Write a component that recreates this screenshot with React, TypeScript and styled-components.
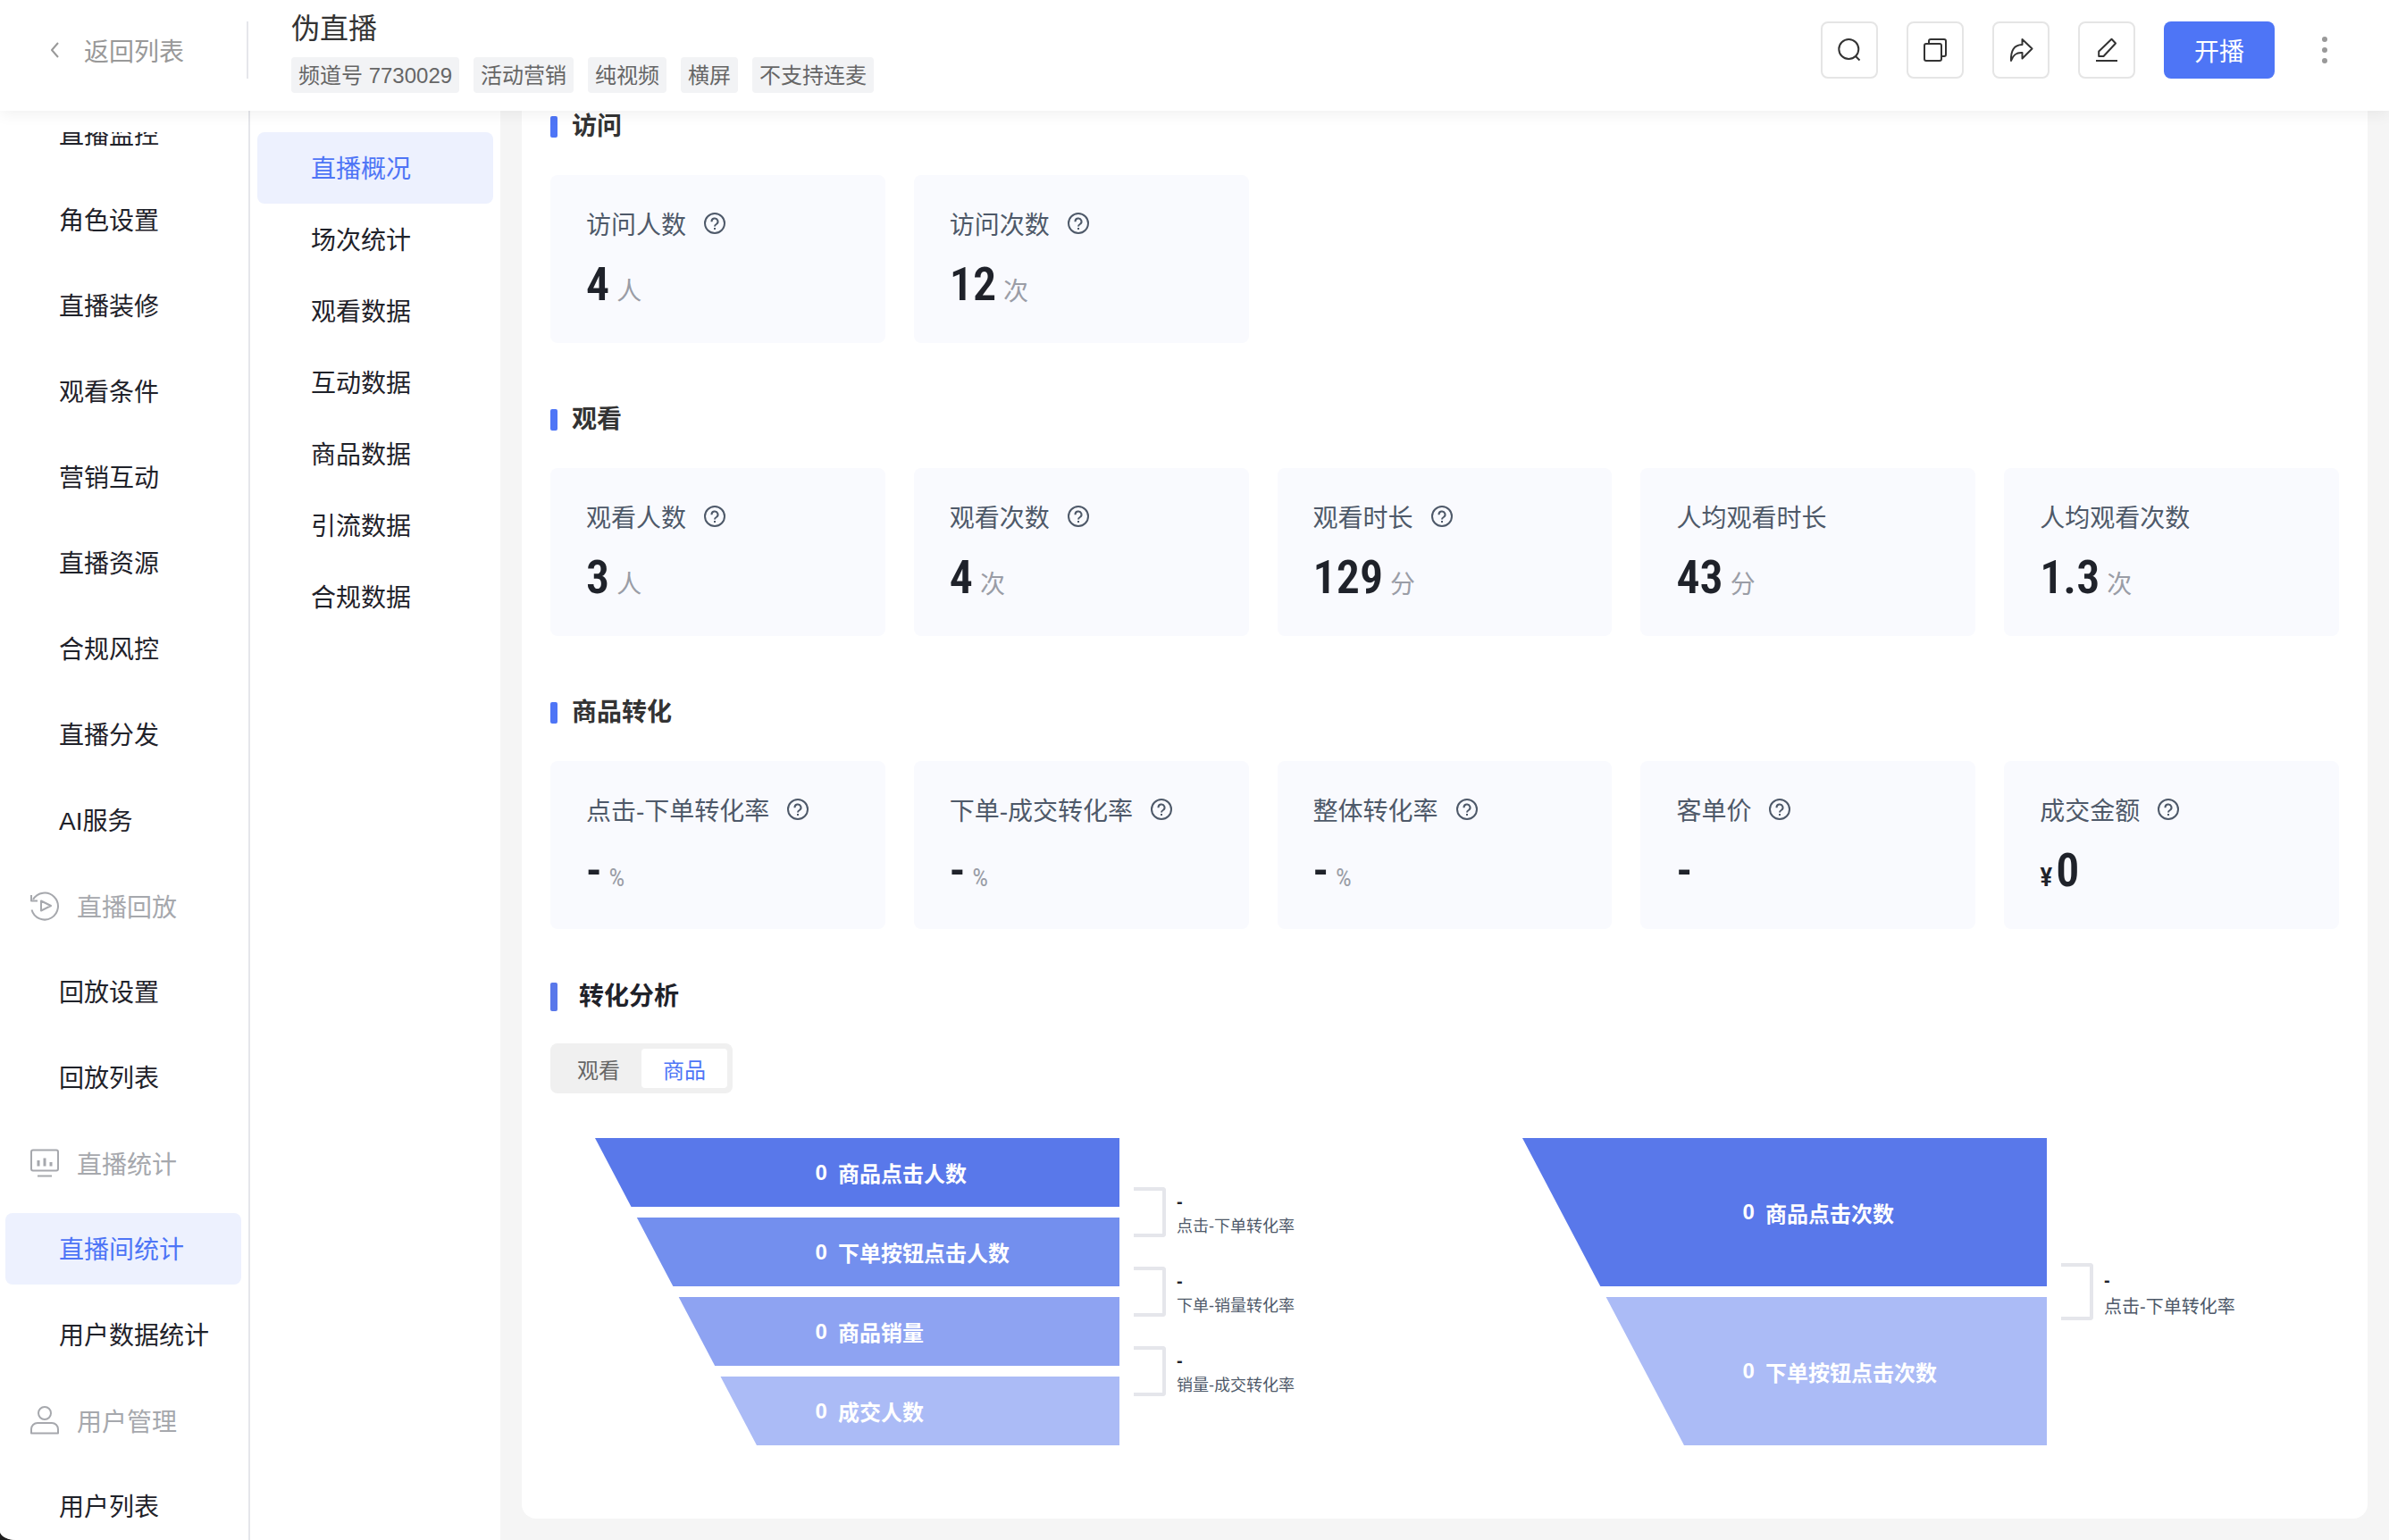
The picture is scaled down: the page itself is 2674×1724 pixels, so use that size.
import React from 'react';
import styled, { createGlobalStyle, css } from 'styled-components';

const sans = `"Liberation Sans", "Noto Sans CJK SC", sans-serif`;
const narrow = `"Roboto Condensed", Roboto, "Noto Sans CJK SC", sans-serif`;

const GlobalStyle = createGlobalStyle`
  *, *::before, *::after { box-sizing: border-box; }
  body { margin: 0; background: #1f1f1f; font-family: ${sans}; }
  h1, h2, p, ul, dl, dd { margin: 0; padding: 0; }
  ul { list-style: none; }
  a { color: inherit; text-decoration: none; }
  button { font: inherit; cursor: pointer; }
`;

const Page = styled.div`
  display: flex;
  flex-direction: column;
  height: 100vh;
  overflow: hidden;
  background: #f5f5f5;
  border-bottom-left-radius: 18px 10px;
`;

const Header = styled.header`
  position: relative;
  z-index: 1;
  display: flex;
  flex: none;
  align-items: flex-start;
  height: 124px;
  background: #fff;
  box-shadow: 0 4px 16px rgba(0, 0, 0, 0.06);
`;

const BackLink = styled.a`
  display: flex;
  align-items: center;
  gap: 20px;
  width: 278px;
  height: 64px;
  margin-top: 24px;
  padding-left: 50px;
  border-right: 2px solid #e5e6eb;
  font-size: 28px;
  color: #999;
`;

const ChannelInfo = styled.div`
  flex: 1;
  padding: 8px 0 0 48px;
`;

const ChannelTitle = styled.h1`
  font-size: 32px;
  font-weight: 400;
  line-height: 48px;
  color: #333;
`;

const TagList = styled.ul`
  display: flex;
  gap: 16px;
  margin-top: 8px;
`;

const Tag = styled.li`
  padding: 2px 8px 0;
  border-radius: 4px;
  background: #f2f3f5;
  font-size: 24px;
  line-height: 38px;
  color: #666;
`;

const Actions = styled.div`
  display: flex;
  align-items: center;
  gap: 32px;
  padding: 24px 48px 0 0;
`;

const IconButton = styled.button`
  display: grid;
  place-items: center;
  width: 64px;
  height: 64px;
  padding: 0;
  border: 2px solid #e5e5e5;
  border-radius: 8px;
  background: #fff;
  color: #333;
`;

const StartButton = styled.button`
  width: 124px;
  height: 64px;
  padding: 0;
  border: 0;
  border-radius: 8px;
  background: #4e75f6;
  font-size: 28px;
  color: #fff;
`;

const MoreButton = styled.button`
  display: grid;
  place-items: center;
  width: 48px;
  height: 64px;
  padding: 0;
  border: 0;
  background: none;
  color: #999;
`;

const Body = styled.div`
  display: flex;
  flex: 1;
  min-height: 0;
`;

const Sidebar = styled.nav`
  flex: none;
  width: 280px;
  padding-top: 24px;
  border-right: 2px solid #e5e6eb;
  background: #fff;
`;

const SidebarScroll = styled.div`
  height: 100%;
  overflow: hidden;
`;

const SidebarList = styled.ul`
  display: flex;
  flex-direction: column;
  gap: 16px;
  margin-top: -38px;
  padding: 0 8px 0 6px;
`;

const activeItem = css`
  background: #edf1fe;
  color: #4e75f6;
`;

const NavLink = styled.a<{ $active?: boolean }>`
  display: block;
  padding: 4px 0 0 60px;
  border-radius: 8px;
  font-size: 28px;
  line-height: 76px;
  color: #1f222a;
  ${(p) => p.$active && activeItem}
`;

const NavGroup = styled.div`
  display: flex;
  align-items: center;
  gap: 18px;
  height: 80px;
  padding-left: 26px;
  font-size: 28px;
  color: #a6a8ad;
`;

const SubNav = styled.nav`
  flex: none;
  width: 280px;
  padding: 24px 8px 0;
  background: #fff;
`;

const Main = styled.main`
  flex: 1;
  min-width: 0;
  padding: 0 24px 24px;
`;

const Panel = styled.div`
  height: 100%;
  padding: 0 32px;
  border-radius: 0 0 16px 16px;
  background: #fff;
`;

const MetricSection = styled.section`
  padding-bottom: 68px;
`;

const SectionTitle = styled.h2`
  display: flex;
  align-items: center;
  gap: 16px;
  height: 36px;
  font-size: 28px;
  font-weight: 700;
  line-height: 36px;
  color: #333;

  &::before {
    content: '';
    width: 8px;
    height: 24px;
    border-radius: 2px;
    background: #4e75f6;
  }
`;

const AnalysisTitle = styled(SectionTitle)`
  gap: 24px;
  margin-top: -10px;
  color: #1f222a;

  &::before {
    height: 32px;
    background: #5978ea;
  }
`;

const MetricGrid = styled.div`
  display: grid;
  grid-template-columns: repeat(5, minmax(0, 1fr));
  gap: 32px;
  margin-top: 36px;
`;

const MetricCard = styled.dl`
  height: 188px;
  padding: 34px 40px 0;
  border-radius: 8px;
  background: #f9fafe;
`;

const MetricLabel = styled.dt`
  display: flex;
  align-items: center;
  gap: 20px;
  height: 40px;
  font-size: 28px;
  color: #4e5969;
`;

const MetricValue = styled.dd`
  display: flex;
  align-items: baseline;
  margin-top: 17px;
  font-family: ${narrow};
  font-size: 52px;
  font-weight: 600;
  line-height: 64px;
  color: #1f222a;
`;

const Currency = styled.span`
  margin-right: 4px;
  font-size: 30px;
  font-weight: 500;
`;

const Unit = styled.span`
  margin-left: 8px;
  font-size: 28px;
  font-weight: 400;
  color: #9a9da6;
`;

const Segmented = styled.div`
  display: inline-flex;
  margin-top: 34px;
  padding: 6px;
  border-radius: 8px;
  background: #f0f0f0;
`;

const Segment = styled.button<{ $active?: boolean }>`
  width: 96px;
  height: 44px;
  padding: 0;
  border: 0;
  border-radius: 4px;
  background: ${(p) => (p.$active ? '#fff' : 'transparent')};
  font-size: 24px;
  color: ${(p) => (p.$active ? '#4e75f6' : '#666')};
`;

const Charts = styled.div`
  display: grid;
  grid-template-columns: repeat(2, minmax(0, 1fr));
  gap: 74px;
  margin-top: 50px;
`;

const Chart = styled.div`
  display: flex;
  height: 344px;
  padding-left: 50px;
`;

const Funnel = styled.div`
  display: flex;
  flex: 1;
  flex-direction: column;
  gap: 12px;
  clip-path: polygon(0 0, 100% 0, 100% 100%, 181px 100%);
`;

const Layer = styled.div<{ $color: string }>`
  display: flex;
  flex: 1;
  align-items: center;
  gap: 12px;
  padding-left: 42%;
  background: ${(p) => p.$color};
  font-size: 24px;
  font-weight: 700;
  color: #fff;
`;

const Rates = styled.div`
  display: flex;
  flex: none;
  flex-direction: column;
  justify-content: center;
  gap: 33px;
  width: 327px;
  padding-left: 16px;
`;

const Rate = styled.div<{ $large?: boolean }>`
  display: flex;
  align-items: center;
  gap: 12px;
  height: ${(p) => (p.$large ? 64 : 56)}px;
  font-size: ${(p) => (p.$large ? 20 : 18)}px;
  line-height: ${(p) => (p.$large ? 30 : 28)}px;
  color: #4e5969;

  &::before {
    content: '';
    width: 36px;
    height: 100%;
    border: 4px solid #e5e6eb;
    border-left: 0;
    border-radius: 0 4px 4px 0;
  }
`;

const RateText = styled.div`
  padding-top: 4px;
`;

const RateValue = styled.p`
  font-size: 20px;
  font-weight: 700;
  color: #1f222a;
`;

const strokeProps = {
  fill: 'none',
  stroke: 'currentColor',
  strokeWidth: 2,
  strokeLinejoin: 'round' as const,
};

const BackIcon = () => (
  <svg width="24" height="24" viewBox="0 0 24 24" {...strokeProps} aria-hidden="true">
    <path d="M15 4 8 12l7 8" />
  </svg>
);

const SearchIcon = () => (
  <svg width="28" height="28" viewBox="0 0 28 28" {...strokeProps} aria-hidden="true">
    <circle cx="13.3" cy="13" r="11" />
    <path d="m21 21 4.500 4.500" />
  </svg>
);

const CopyIcon = () => (
  <svg width="28" height="28" viewBox="0 0 28 28" {...strokeProps} aria-hidden="true">
    <rect x="2" y="7" width="19" height="19" rx="2" />
    <path d="M7 7V4a2 2 0 0 1 2-2h15a2 2 0 0 1 2 2v15a2 2 0 0 1-2 2h-3" />
  </svg>
);

const ShareIcon = () => (
  <svg width="28" height="28" viewBox="0 0 28 28" {...strokeProps} aria-hidden="true">
    <path d="M15.500 2 26.500 12.500 15.500 23.500V17C9 16.500 5.500 19 3 26 2.500 15 6 8.200 15.500 8Z" />
  </svg>
);

const EditIcon = () => (
  <svg width="28" height="28" viewBox="0 0 28 28" {...strokeProps} aria-hidden="true">
    <path d="M19.500 1.800 24 6.500 10.500 21H5.200V15.500Z" />
    <path d="M2 26h24" />
  </svg>
);

const MoreIcon = () => (
  <svg width="8" height="32" viewBox="0 0 8 32" fill="currentColor" aria-hidden="true">
    <circle cx="4" cy="4" r="3" />
    <circle cx="4" cy="16" r="3" />
    <circle cx="4" cy="28" r="3" />
  </svg>
);

const HelpIcon = () => (
  <svg width="24" height="24" viewBox="1 1 24 24" {...strokeProps} aria-hidden="true">
    <circle cx="13" cy="13" r="11" />
    <path d="M9.500 11.200a3.500 3.500 0 1 1 5.300 2.800c-1.200.7-1.800 1.200-1.800 2.500" />
    <path d="M13 18v2" />
  </svg>
);

const ReplayIcon = () => (
  <svg width="36" height="36" viewBox="0 0 36 36" {...strokeProps} aria-hidden="true">
    <path d="M3.500 22.500A15 15 0 1 0 5 11" />
    <path d="M3 6v6.500h7" />
    <path d="M14 12.500v11l11-5.500Z" />
  </svg>
);

const StatsIcon = () => (
  <svg width="36" height="36" viewBox="0 0 36 36" {...strokeProps} aria-hidden="true">
    <rect x="3" y="3.500" width="30" height="23" rx="2" />
    <path d="M11 21.500V15M18 21.500V12.500M25 21.500v-4.500" strokeWidth="3" />
    <path d="M10 32.500h16" />
  </svg>
);

const UserIcon = () => (
  <svg width="36" height="36" viewBox="0 0 36 36" {...strokeProps} aria-hidden="true">
    <circle cx="18" cy="10" r="7" />
    <path d="M3 32.500V28a7 7 0 0 1 7-7h16a7 7 0 0 1 7 7v4.500Z" />
  </svg>
);

type NavEntry = { text: string; icon?: React.ReactNode; active?: boolean };

const sidebar: NavEntry[] = [
  { text: '直播监控' },
  { text: '角色设置' },
  { text: '直播装修' },
  { text: '观看条件' },
  { text: '营销互动' },
  { text: '直播资源' },
  { text: '合规风控' },
  { text: '直播分发' },
  { text: 'AI服务' },
  { text: '直播回放', icon: <ReplayIcon /> },
  { text: '回放设置' },
  { text: '回放列表' },
  { text: '直播统计', icon: <StatsIcon /> },
  { text: '直播间统计', active: true },
  { text: '用户数据统计' },
  { text: '用户管理', icon: <UserIcon /> },
  { text: '用户列表' },
];

const subNav = ['直播概况', '场次统计', '观看数据', '互动数据', '商品数据', '引流数据', '合规数据'];

type Metric = { label: string; value: string; unit?: string; prefix?: string; help?: boolean };

const sections: { title: string; metrics: Metric[] }[] = [
  {
    title: '访问',
    metrics: [
      { label: '访问人数', value: '4', unit: '人', help: true },
      { label: '访问次数', value: '12', unit: '次', help: true },
    ],
  },
  {
    title: '观看',
    metrics: [
      { label: '观看人数', value: '3', unit: '人', help: true },
      { label: '观看次数', value: '4', unit: '次', help: true },
      { label: '观看时长', value: '129', unit: '分', help: true },
      { label: '人均观看时长', value: '43', unit: '分' },
      { label: '人均观看次数', value: '1.3', unit: '次' },
    ],
  },
  {
    title: '商品转化',
    metrics: [
      { label: '点击-下单转化率', value: '-', unit: '%', help: true },
      { label: '下单-成交转化率', value: '-', unit: '%', help: true },
      { label: '整体转化率', value: '-', unit: '%', help: true },
      { label: '客单价', value: '-', help: true },
      { label: '成交金额', value: '0', prefix: '¥', help: true },
    ],
  },
];

const funnels = [
  {
    large: false,
    layers: [
      { label: '商品点击人数', color: '#5978ea' },
      { label: '下单按钮点击人数', color: '#738fee' },
      { label: '商品销量', color: '#8ea3f2' },
      { label: '成交人数', color: '#abbbf6' },
    ],
    rates: ['点击-下单转化率', '下单-销量转化率', '销量-成交转化率'],
  },
  {
    large: true,
    layers: [
      { label: '商品点击次数', color: '#5978ea' },
      { label: '下单按钮点击次数', color: '#abbbf6' },
    ],
    rates: ['点击-下单转化率'],
  },
];

export default function App() {
  return (
    <>
      <GlobalStyle />
      <Page>
        <Header>
          <BackLink href="#">
            <BackIcon />
            返回列表
          </BackLink>
          <ChannelInfo>
            <ChannelTitle>伪直播</ChannelTitle>
            <TagList>
              {['频道号 7730029', '活动营销', '纯视频', '横屏', '不支持连麦'].map((tag) => (
                <Tag key={tag}>{tag}</Tag>
              ))}
            </TagList>
          </ChannelInfo>
          <Actions>
            <IconButton aria-label="搜索"><SearchIcon /></IconButton>
            <IconButton aria-label="复制"><CopyIcon /></IconButton>
            <IconButton aria-label="分享"><ShareIcon /></IconButton>
            <IconButton aria-label="编辑"><EditIcon /></IconButton>
            <StartButton>开播</StartButton>
            <MoreButton aria-label="更多"><MoreIcon /></MoreButton>
          </Actions>
        </Header>
        <Body>
          <Sidebar>
            <SidebarScroll>
              <SidebarList>
                {sidebar.map((item) => (
                  <li key={item.text}>
                    {item.icon ? (
                      <NavGroup>
                        {item.icon}
                        {item.text}
                      </NavGroup>
                    ) : (
                      <NavLink href="#" $active={item.active}>
                        {item.text}
                      </NavLink>
                    )}
                  </li>
                ))}
              </SidebarList>
            </SidebarScroll>
          </Sidebar>
          <SubNav>
            <ul>
              {subNav.map((text, i) => (
                <li key={text}>
                  <NavLink href="#" $active={i === 0}>
                    {text}
                  </NavLink>
                </li>
              ))}
            </ul>
          </SubNav>
          <Main>
            <Panel>
              {sections.map((section) => (
                <MetricSection key={section.title}>
                  <SectionTitle>{section.title}</SectionTitle>
                  <MetricGrid>
                    {section.metrics.map((m) => (
                      <MetricCard key={m.label}>
                        <MetricLabel>
                          {m.label}
                          {m.help && <HelpIcon />}
                        </MetricLabel>
                        <MetricValue>
                          {m.prefix && <Currency>{m.prefix}</Currency>}
                          {m.value}
                          {m.unit && <Unit>{m.unit}</Unit>}
                        </MetricValue>
                      </MetricCard>
                    ))}
                  </MetricGrid>
                </MetricSection>
              ))}
              <section>
                <AnalysisTitle>转化分析</AnalysisTitle>
                <Segmented>
                  <Segment>观看</Segment>
                  <Segment $active>商品</Segment>
                </Segmented>
                <Charts>
                  {funnels.map((funnel) => (
                    <Chart key={funnel.layers[0].label}>
                      <Funnel>
                        {funnel.layers.map((layer) => (
                          <Layer key={layer.label} $color={layer.color}>
                            <span>0</span>
                            <span>{layer.label}</span>
                          </Layer>
                        ))}
                      </Funnel>
                      <Rates>
                        {funnel.rates.map((rate) => (
                          <Rate key={rate} $large={funnel.large}>
                            <RateText>
                              <RateValue>-</RateValue>
                              <p>{rate}</p>
                            </RateText>
                          </Rate>
                        ))}
                      </Rates>
                    </Chart>
                  ))}
                </Charts>
              </section>
            </Panel>
          </Main>
        </Body>
      </Page>
    </>
  );
}
